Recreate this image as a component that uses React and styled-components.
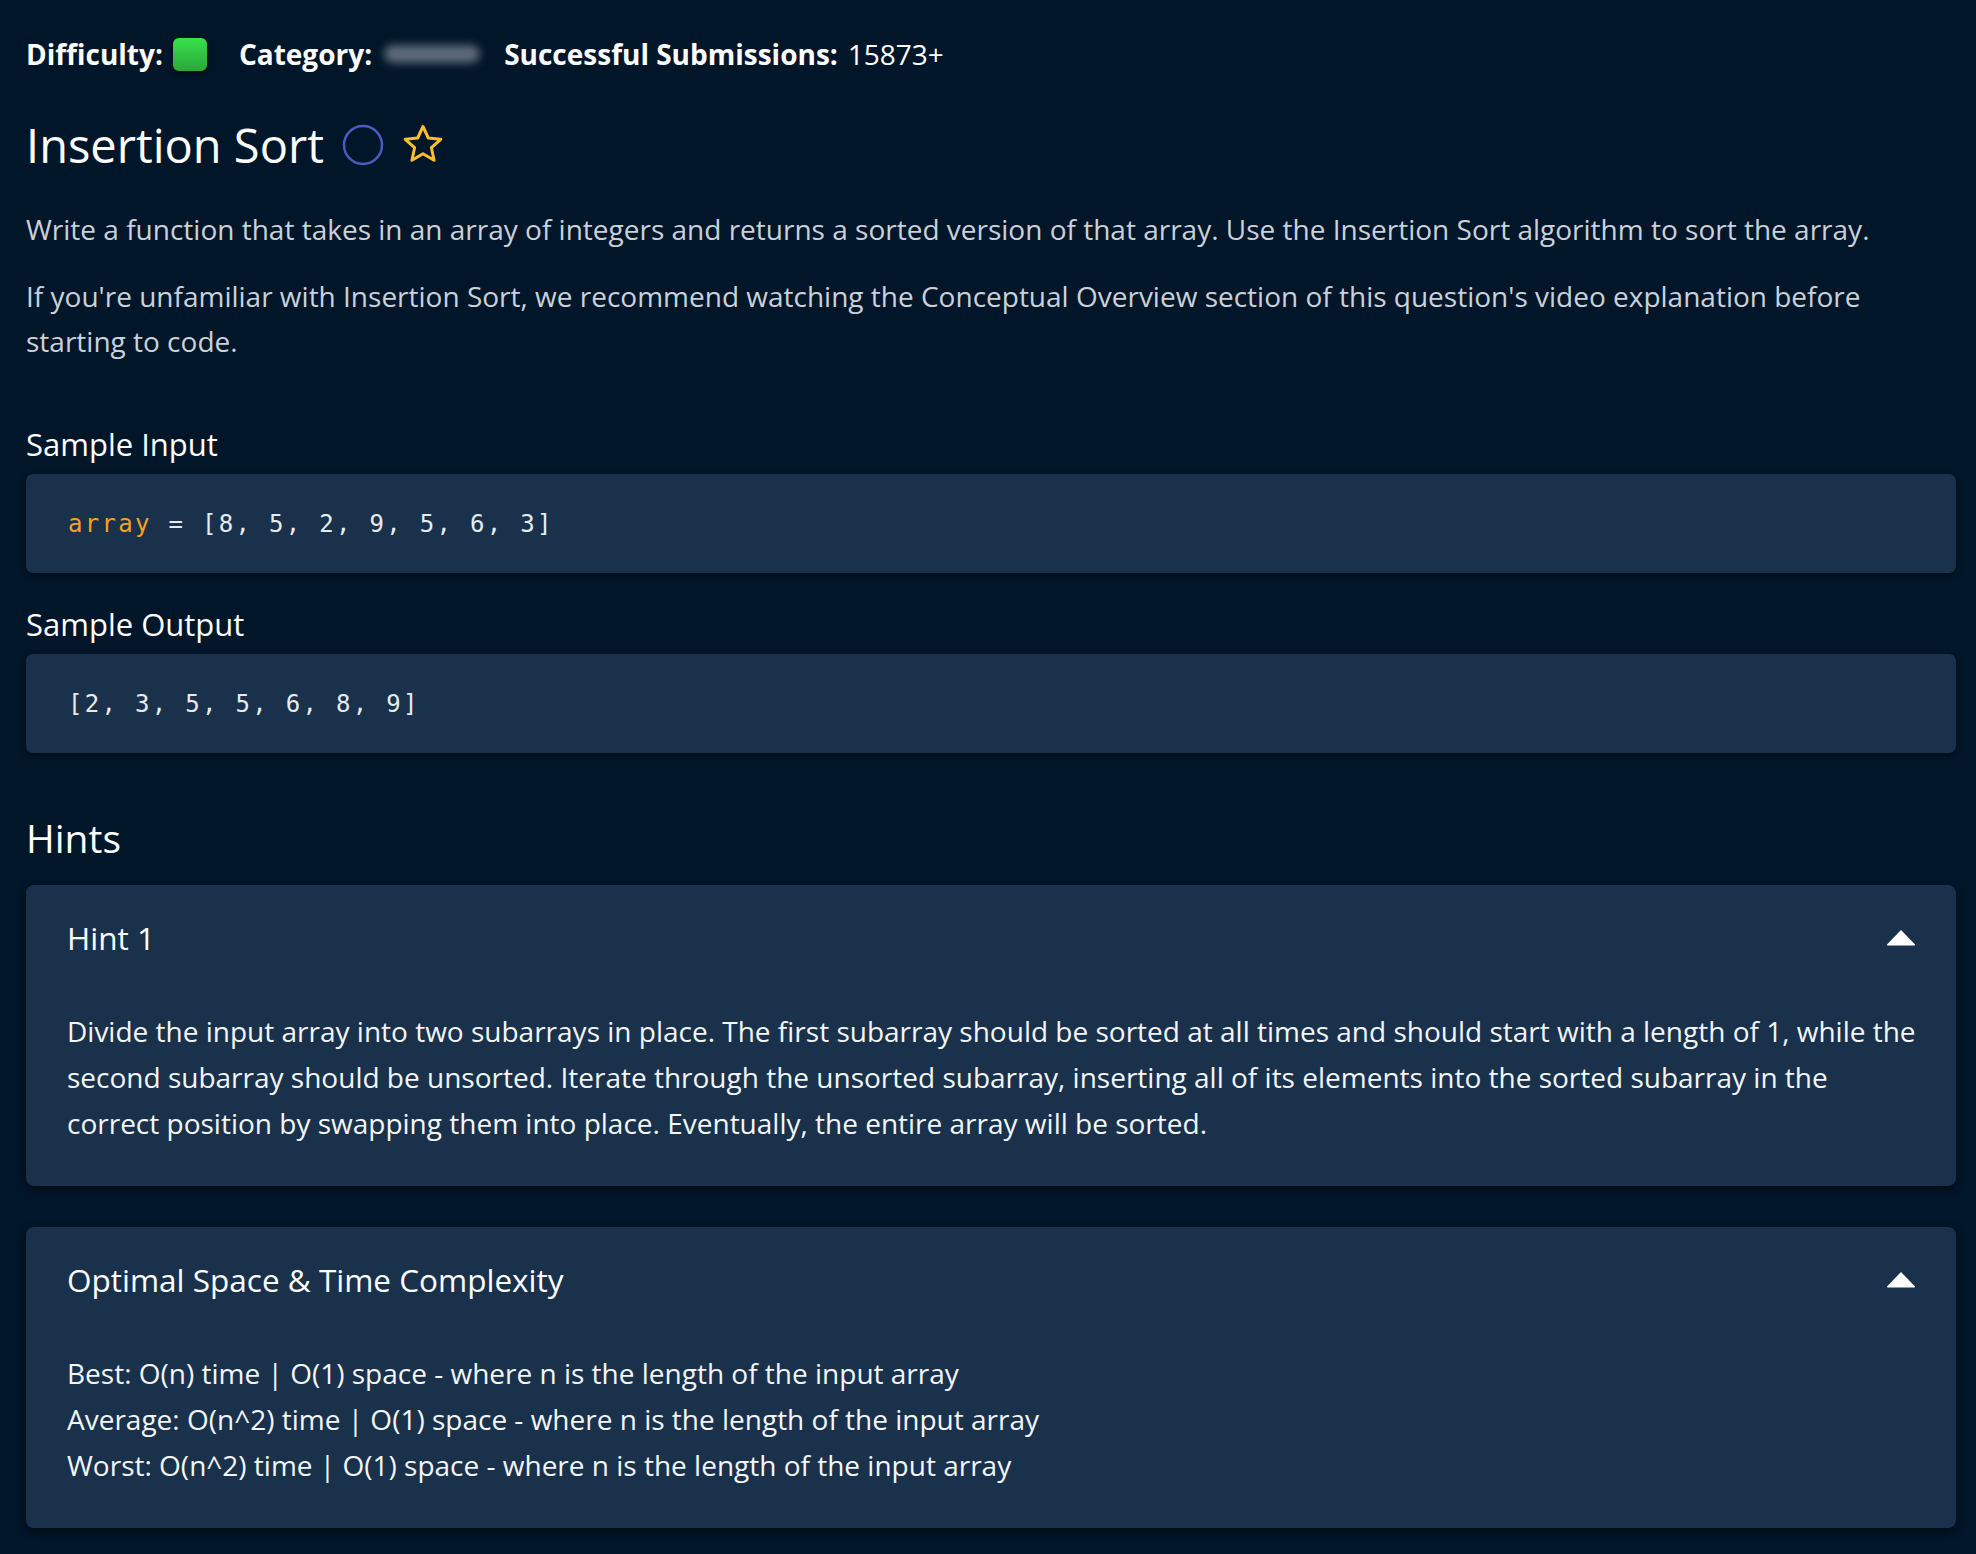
import styled, { createGlobalStyle } from "styled-components";

const GlobalStyle = createGlobalStyle`
  html, body {
    margin: 0;
    padding: 0;
    background: #021629;
  }
  body {
    font-family: "Open Sans", "Liberation Sans", sans-serif;
    color: #ffffff;
  }
`;

const Page = styled.main`
  min-height: 100vh;
  box-sizing: border-box;
  padding: 37px 20px 25px 26px;
`;

const MetaRow = styled.div`
  display: flex;
  align-items: center;
  height: 34px;
  font-size: 28px;
`;

const MetaItem = styled.div`
  display: flex;
  align-items: center;
  margin-right: ${(p) => p.$gap || 0}px;
`;

const MetaLabel = styled.span`
  font-weight: 700;
  margin-right: 10px;
`;

const MetaValue = styled.span`
  font-weight: 400;
`;

const DifficultyBadge = styled.span`
  display: inline-block;
  width: 34px;
  height: 33px;
  border-radius: 6px;
  background: linear-gradient(180deg, #38e04b 0%, #2aa83a 100%);
  box-shadow: 0 3px 5px rgba(0, 0, 0, 0.5);
`;

const BlurredCategory = styled.span`
  display: inline-block;
  width: 96px;
  height: 18px;
  border-radius: 9px;
  background: #5d6a79;
  filter: blur(4px);
  margin-left: 2px;
`;

const TitleRow = styled.div`
  display: flex;
  align-items: center;
  gap: 18px;
  margin-top: 46px;
`;

const Title = styled.h1`
  margin: 0;
  font-size: 47px;
  line-height: 56px;
  font-weight: 400;
`;

const Description = styled.div`
  margin-top: 34px;

  p {
    margin: 0;
    font-size: 28px;
    line-height: 45px;
    color: #c9d1da;
  }
  p + p {
    margin-top: 22px;
  }
`;

const SectionLabel = styled.h3`
  margin: ${(p) => p.$top}px 0 10px;
  font-size: 31px;
  line-height: 40px;
  font-weight: 500;
`;

const CodeBlock = styled.pre`
  margin: 0;
  height: 99px;
  box-sizing: border-box;
  display: flex;
  align-items: center;
  padding: 0 42px;
  background: #19314b;
  border-radius: 7px;
  box-shadow: 0 2px 6px rgba(0, 0, 0, 0.45);
  font-family: "DejaVu Sans Mono", "Liberation Mono", monospace;
  font-size: 24px;
  letter-spacing: 2.3px;
  color: #e8ebee;
`;

const Keyword = styled.span`
  color: #f6a11f;
`;

const HintsHeading = styled.h2`
  margin: 61px 0 23px;
  font-size: 39px;
  line-height: 48px;
  font-weight: 500;
`;

const Card = styled.section`
  background: #19314b;
  border-radius: 8px;
  box-shadow: 0 3px 8px rgba(0, 0, 0, 0.5);

  & + & {
    margin-top: 41px;
  }
`;

const CardHeader = styled.div`
  height: 104px;
  display: flex;
  align-items: center;
  justify-content: space-between;
  padding: 0 40px 0 41px;
  font-size: 31.5px;
`;

const CardBody = styled.div`
  padding: 19px 38px 40px 41px;
  font-size: 28px;
  line-height: 46px;
  color: #f3f5f7;

  p {
    margin: 0;
  }
`;

const CaretUp = () => (
  <svg width="30" height="17" viewBox="0 0 30 17">
    <path d="M15 1 L29 15.5 Q29.5 16.5 28 16.5 L2 16.5 Q0.5 16.5 1 15.5 Z" fill="#ffffff" />
  </svg>
);

const CompletionCircle = () => (
  <svg width="42" height="42" viewBox="0 0 42 42">
    <circle cx="21" cy="21" r="19" fill="none" stroke="#4a5bc0" strokeWidth="2.5" />
  </svg>
);

const FavoriteStar = () => (
  <svg width="42" height="42" viewBox="0 0 42 42">
    <polygon
      points="21,2.5 26.3,14 38.8,15.3 29.4,23.7 32.1,36.2 21,29.8 9.9,36.2 12.6,23.7 3.2,15.3 15.7,14"
      fill="none"
      stroke="#fbbf2e"
      strokeWidth="3"
      strokeLinejoin="round"
    />
  </svg>
);

export default function App() {
  return (
    <Page>
      <GlobalStyle />
      <MetaRow>
        <MetaItem $gap={32}>
          <MetaLabel>Difficulty:</MetaLabel>
          <DifficultyBadge />
        </MetaItem>
        <MetaItem $gap={24}>
          <MetaLabel>Category:</MetaLabel>
          <BlurredCategory />
        </MetaItem>
        <MetaItem>
          <MetaLabel>Successful Submissions:</MetaLabel>
          <MetaValue>15873+</MetaValue>
        </MetaItem>
      </MetaRow>

      <TitleRow>
        <Title>Insertion Sort</Title>
        <CompletionCircle />
        <FavoriteStar />
      </TitleRow>

      <Description>
        <p>
          Write a function that takes in an array of integers and returns a sorted version of that
          array. Use the Insertion Sort algorithm to sort the array.
        </p>
        <p>
          If you're unfamiliar with Insertion Sort, we recommend watching the Conceptual Overview
          section of this question's video explanation before starting to code.
        </p>
      </Description>

      <SectionLabel $top={60}>Sample Input</SectionLabel>
      <CodeBlock>
        <span>
          <Keyword>array</Keyword> = [8, 5, 2, 9, 5, 6, 3]
        </span>
      </CodeBlock>

      <SectionLabel $top={31}>Sample Output</SectionLabel>
      <CodeBlock>[2, 3, 5, 5, 6, 8, 9]</CodeBlock>

      <HintsHeading>Hints</HintsHeading>

      <Card>
        <CardHeader>
          <span>Hint 1</span>
          <CaretUp />
        </CardHeader>
        <CardBody>
          <p>
            Divide the input array into two subarrays in place. The first subarray should be sorted
            at all times and should start with a length of 1, while the second subarray should be
            unsorted. Iterate through the unsorted subarray, inserting all of its elements into the
            sorted subarray in the correct position by swapping them into place. Eventually, the
            entire array will be sorted.
          </p>
        </CardBody>
      </Card>

      <Card>
        <CardHeader>
          <span>Optimal Space &amp; Time Complexity</span>
          <CaretUp />
        </CardHeader>
        <CardBody>
          <p>Best: O(n) time | O(1) space - where n is the length of the input array</p>
          <p>Average: O(n^2) time | O(1) space - where n is the length of the input array</p>
          <p>Worst: O(n^2) time | O(1) space - where n is the length of the input array</p>
        </CardBody>
      </Card>
    </Page>
  );
}
